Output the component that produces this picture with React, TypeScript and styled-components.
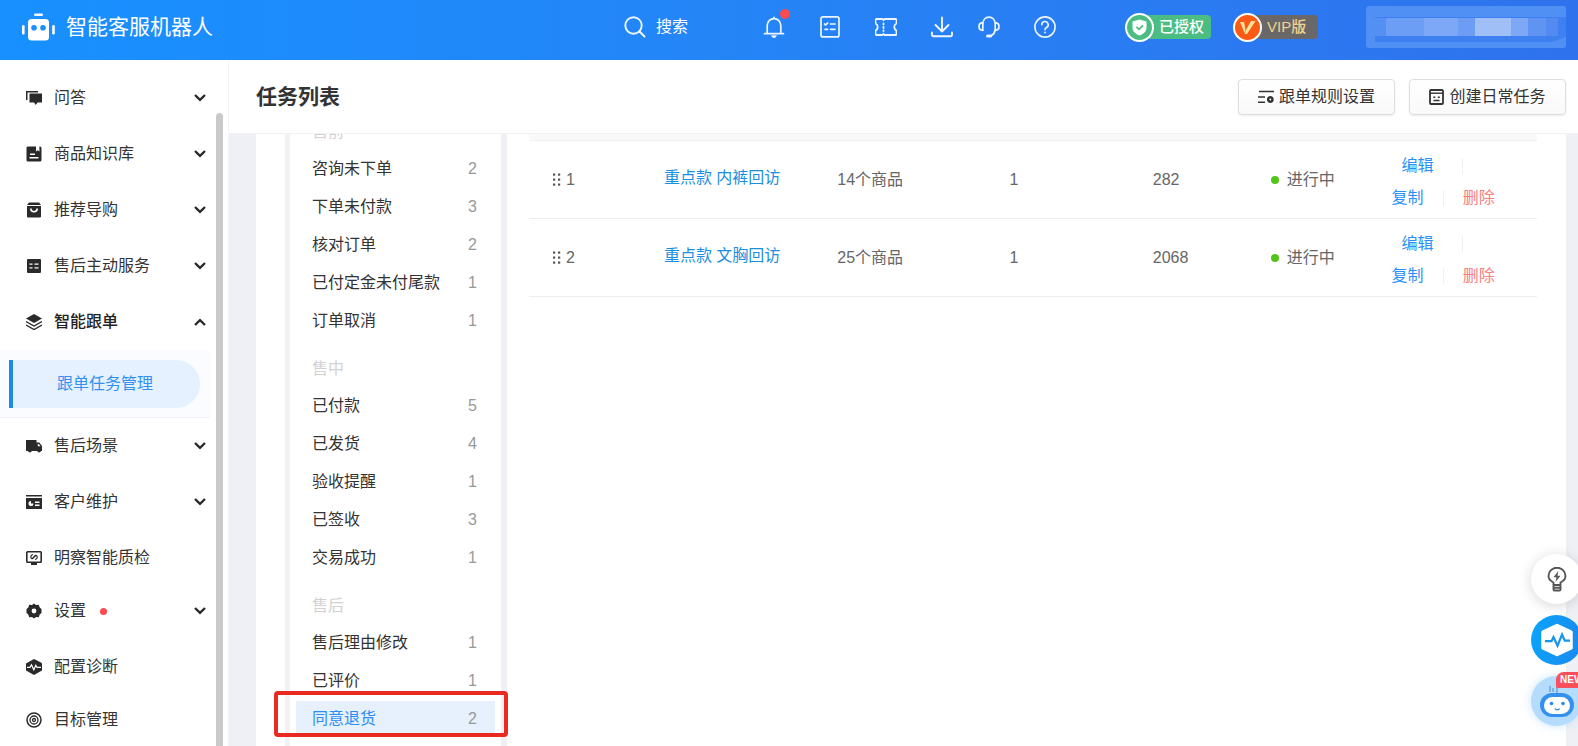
import React from 'react';
import styled, { createGlobalStyle } from 'styled-components';

const GlobalStyle = createGlobalStyle`
  * { box-sizing: border-box; }
  html, body { margin: 0; padding: 0; }
  body {
    font-family: "Liberation Sans", "Noto Sans CJK SC", sans-serif;
    font-size: 16px;
    line-height: 24px;
    color: #333;
    background: #fff;
  }
  button { font: inherit; color: inherit; background: none; border: 0; padding: 0; cursor: pointer; }
  a { text-decoration: none; color: inherit; }
  ul { list-style: none; margin: 0; padding: 0; }
  h1, h2 { margin: 0; font-weight: normal; font-size: inherit; }
  svg { display: block; flex: none; }
`;

/* ---------- shell ---------- */

const Shell = styled.div`
  position: relative;
  display: flex;
  flex-direction: column;
  height: 100vh;
  overflow: hidden;
`;

const Body = styled.div`
  display: flex;
  flex: 1;
  min-height: 0;
`;

/* ---------- top bar ---------- */

const TopBar = styled.header`
  display: flex;
  align-items: center;
  flex: none;
  height: 60px;
  padding: 0 12px 6px 22px;
  color: #fff;
  background: linear-gradient(90deg, #1890ff 0%, #2485f7 45%, #2f72ee 100%);
`;

const Brand = styled.a`
  display: flex;
  align-items: center;
  gap: 11px;
  flex: 1;
  font-size: 21px;
`;

const SearchButton = styled.button`
  display: flex;
  align-items: center;
  gap: 10px;
  margin-right: 75px;
`;

const Tools = styled.div`
  display: flex;
  gap: 34px;
  margin-right: 69px;
`;

const ToolPair = styled.div`
  display: flex;
  gap: 25px;
`;

const ToolButton = styled.button`
  position: relative;
  display: flex;
`;

const AlertDot = styled.i`
  position: absolute;
  top: -7px;
  right: -5px;
  width: 10px;
  height: 10px;
  border-radius: 50%;
  background: #fb4b4f;
`;

const Badges = styled.div`
  display: flex;
  gap: 36px;
  margin: 0 48px 0 14px;
`;

const Badge = styled.span<{ $bg: string; $color: string }>`
  display: flex;
  align-items: center;
  gap: 5px;
  min-width: 71px;
  height: 24px;
  padding-right: 7px;
  font-size: 15px;
  font-weight: 500;
  color: ${p => p.$color};
  background: ${p => p.$bg};
  border-radius: 4px;
`;

const BadgeSeal = styled.span<{ $bg: string }>`
  display: flex;
  align-items: center;
  justify-content: center;
  width: 29px;
  height: 29px;
  margin-left: -14px;
  border: 2px solid #fff;
  border-radius: 50%;
  background: ${p => p.$bg};
`;

/* ---------- sidebar ---------- */

const Sidebar = styled.nav`
  display: flex;
  flex: none;
  width: 229px;
  border-right: 1px solid #f4f4f7;
  background: #fff;
`;

const Menu = styled.ul`
  flex: 1;
  padding-top: 10px;
`;

const MenuButton = styled.button<{ $leaf?: boolean; $open?: boolean }>`
  display: flex;
  align-items: center;
  gap: 12px;
  width: 100%;
  height: ${p => (p.$leaf ? 53 : 56)}px;
  padding: ${p => (p.$leaf ? 3 : 0)}px 4px 0 26px;
  text-align: left;
  color: ${p => (p.$open ? '#222' : '#333')};
  font-weight: ${p => (p.$open ? 500 : 400)};
`;

const MenuLabel = styled.span`
  display: flex;
  align-items: center;
  gap: 14px;
  flex: 1;
`;

const NewDot = styled.i`
  width: 7px;
  height: 7px;
  border-radius: 50%;
  background: #fb4b50;
`;

const SubMenu = styled.ul`
  height: 68px;
  padding: 10px 10px 10px 9px;
  background: #fafcff;
  border-bottom: 1px solid #eff1f5;
`;

const SubLink = styled.a`
  display: flex;
  align-items: center;
  height: 48px;
  padding-left: 44px;
  border-left: 4px solid #1f88ea;
  border-radius: 0 24px 24px 0;
  color: #3390f3;
  background: #e5f1fe;
`;

const ScrollTrack = styled.div`
  flex: none;
  width: 18px;
  padding: 53px 5px 0 6px;
`;

const ScrollThumb = styled.div`
  height: 100%;
  border-radius: 4px 4px 0 0;
  background: #c9c9c9;
`;

/* ---------- page ---------- */

const Page = styled.main`
  display: flex;
  flex-direction: column;
  flex: 1;
  min-width: 0;
`;

const PageHead = styled.div`
  display: flex;
  align-items: center;
  gap: 14px;
  flex: none;
  height: 74px;
  padding: 0 12px 0 27px;
  border-bottom: 1px solid #f1f1f4;
`;

const PageTitle = styled.h1`
  flex: 1;
  font-size: 21px;
  font-weight: 700;
  line-height: 30px;
`;

const HeadButton = styled.button`
  display: flex;
  align-items: center;
  justify-content: center;
  gap: 5px;
  width: 157px;
  height: 36px;
  border: 1px solid #dedede;
  border-radius: 4px;
  background: linear-gradient(#fff, #f9f9f9);
  box-shadow: 0 1px 2px rgba(0, 0, 0, 0.08);
`;

const Canvas = styled.div`
  display: flex;
  flex: 1;
  min-height: 0;
  padding: 0 12px 0 27px;
  background: #eff0f5;
  overflow: hidden;
`;

const Card = styled.div`
  display: flex;
  flex: 1;
  min-width: 0;
  padding: 0 29px;
  background: #fff;
`;

const Stages = styled.aside`
  flex: none;
  width: 222px;
  border-left: 5px solid #f2f2f4;
  border-right: 6px solid #f0f0f4;
`;

const StageList = styled.div`
  display: flex;
  flex-direction: column;
  gap: 11px;
  margin-top: -20px;
`;

const StageTitle = styled.h2`
  padding-left: 22px;
  line-height: 36px;
  color: #d2d2d2;
`;

const StageItem = styled.li`
  position: relative;
  height: 38px;
  padding: 1px 6px;
`;

const StageButton = styled.button<{ $active?: boolean }>`
  display: flex;
  align-items: center;
  justify-content: space-between;
  width: 100%;
  height: 36px;
  padding: 0 18px 0 16px;
  color: ${p => (p.$active ? '#2b8ef5' : '#333')};
  background: ${p => (p.$active ? '#e6f1fd' : 'transparent')};
`;

const StageCount = styled.span`
  color: #999;
`;

const Highlight = styled.div`
  position: absolute;
  inset: -9px -7px 1px -16px;
  border: 4px solid #e82a20;
  border-radius: 4px;
  pointer-events: none;
`;

const TableArea = styled.section`
  flex: 1;
  min-width: 0;
  padding-left: 22px;
`;

const TableTop = styled.div`
  height: 7px;
  background: #f9f9fa;
  border-bottom: 1px solid #f0f0f2;
`;

const Table = styled.table`
  width: 100%;
  table-layout: fixed;
  border-collapse: separate;
  border-spacing: 0;
  color: #666;
`;

const Col = styled.col<{ $w?: string }>`
  width: ${p => p.$w ?? 'auto'};
`;

const Cell = styled.td<{ $top?: boolean }>`
  height: 78px;
  padding: ${p => (p.$top ? '9px' : '0')} 0 0 24px;
  vertical-align: ${p => (p.$top ? 'top' : 'middle')};
  border-bottom: 1px solid #eeeef0;
  white-space: nowrap;
`;

const Inline = styled.span<{ $gap: number }>`
  display: flex;
  align-items: center;
  gap: ${p => p.$gap}px;
`;

const TaskLink = styled.a`
  display: block;
  padding-bottom: 4px;
  color: #1a8fe0;
`;

const RunDot = styled.i`
  width: 8px;
  height: 8px;
  border-radius: 50%;
  background: #52c41a;
`;

const ActionRow = styled.div<{ $first?: boolean }>`
  display: flex;
  align-items: center;
  gap: ${p => (p.$first ? 28 : 19)}px;
  height: 32px;
  padding-left: ${p => (p.$first ? 10 : 0)}px;
`;

const Action = styled.a<{ $danger?: boolean }>`
  color: ${p => (p.$danger ? '#f78080' : '#2b90f5')};
`;

const Divider = styled.i`
  width: 1px;
  height: 16px;
  background: #f0f0f2;
`;

/* ---------- floating tools ---------- */

const FloatStack = styled.div`
  position: absolute;
  right: -4px;
  bottom: 20px;
  display: flex;
  flex-direction: column;
  gap: 11px;
`;

const FloatButton = styled.button<{ $bg: string; $shadow: string }>`
  position: relative;
  display: flex;
  align-items: center;
  justify-content: center;
  width: 51px;
  height: 50px;
  border-radius: 50%;
  background: ${p => p.$bg};
  box-shadow: ${p => p.$shadow};
`;

const NewTag = styled.span`
  position: absolute;
  top: -4px;
  left: 25px;
  padding: 0 4px;
  border-radius: 8px 8px 8px 2px;
  font-size: 10px;
  font-weight: 700;
  line-height: 16px;
  color: #fff;
  background: #f84f5c;
`;

/* ---------- icons ---------- */

const Line = ({ size = 22, w = 1.6, children }: { size?: number; w?: number; children: React.ReactNode }) => (
  <svg width={size} height={size} viewBox="0 0 22 22" fill="none" stroke="#fff" strokeOpacity="0.92" strokeWidth={w} strokeLinecap="round" strokeLinejoin="round">
    {children}
  </svg>
);

const RobotLogo = () => (
  <svg width="33" height="28" viewBox="0 0 33 28" fill="#fff">
    <rect x="12" y="0.5" width="9" height="2.6" rx="1.3" />
    <rect x="0" y="12" width="2.6" height="9.5" rx="1.3" />
    <rect x="30.2" y="12" width="2.6" height="9.5" rx="1.3" />
    <path fillRule="evenodd" d="M9.500 6h14a3.500 3.500 0 0 1 3.500 3.500v14.500a3.500 3.500 0 0 1-3.500 3.500h-14a3.500 3.500 0 0 1-3.500-3.500V9.500A3.500 3.500 0 0 1 9.500 6zM12 12a2.800 2.800 0 1 0 0 5.600 2.800 2.800 0 0 0 0-5.600zm9 0a2.800 2.800 0 1 0 0 5.600 2.800 2.800 0 0 0 0-5.600z" />
  </svg>
);

const SearchIcon = () => (
  <Line w={1.9}><circle cx="9.5" cy="9.5" r="8.2" /><path d="M15.500 15.500l5 5" /></Line>
);
const BellIcon = () => (
  <Line w={1.7}>
    <path d="M1.500 17.700h19M4.200 17.500V9.500a6.800 6.800 0 0 1 13.600 0v8M11 2.500V1.300" />
    <path d="M8.800 20a2.300 2.300 0 0 0 4.400 0z" fill="#fff" strokeWidth="0.8" />
  </Line>
);
const FormIcon = () => (
  <Line w={1.7}>
    <rect x="2" y="0.900" width="18" height="20" rx="2" />
    <path d="M5.500 8l1.200 1 2-2M11.500 8h4.500M6 13.300h2.600M11.500 13.300h4.500" />
  </Line>
);
const TicketIcon = () => (
  <Line w={1.8}>
    <path d="M1.500 3h6l1 1.200L9.500 3h11a1 1 0 0 1 1 1v3.500c-3 1.500-3 5.500 0 7V18a1 1 0 0 1-1 1h-11l-1-1.200L7.500 19h-6a1 1 0 0 1-1-1v-3.500c3-1.500 3-5.500 0-7V4a1 1 0 0 1 1-1z" />
    <path d="M8.500 7.500v1M8.500 11v1M8.500 14.300v0.700" />
  </Line>
);
const DownloadIcon = () => (
  <Line w={1.9}><path d="M11 1.500v13.500M4.500 9l6.500 6.500L17.500 9M1 16.500v2.500a1.200 1.200 0 0 0 1.200 1.200h17.600A1.200 1.200 0 0 0 21 19v-2.500" /></Line>
);
const HeadsetIcon = () => (
  <Line w={1.7}>
    <path d="M4.800 14V8.500C4.800 4 7.500 1.200 11 1.200s6.200 2.800 6.200 7.300V14c-.5 3-2 4.800-4.200 5.800" />
    <path d="M4.500 6.800C2.200 6.800 1 8 1 10.500s1.300 3.800 3.800 3.800M17.500 6.800c2.300 0 3.500 1.200 3.500 3.700s-1.300 3.800-3.800 3.800" />
    <path d="M9.500 20h3" strokeWidth="3" />
  </Line>
);
const HelpIcon = () => (
  <Line>
    <circle cx="11" cy="11" r="10.100" />
    <path d="M7.800 8.700a3.200 3.200 0 1 1 4.700 2.800c-1 .6-1.500 1.100-1.500 2.300M11 16.300v.4" />
  </Line>
);

const ShieldSeal = () => (
  <svg width="15" height="17" viewBox="0 0 15 17">
    <path d="M7.500 0.500L14.500 2.500v6c0 4-3 6.500-7 8-4-1.500-7-4-7-8v-6z" fill="#fff" />
    <path d="M4.500 7.800l2.500 2.500 4-4" fill="none" stroke="#4bbd83" strokeWidth="1.700" />
  </svg>
);
const VipSeal = () => (
  <svg width="17" height="15" viewBox="0 0 17 15" fill="#ffe39a">
    <path d="M1 2h4l1.500 8L5.500 13z" />
    <path d="M12 1h4.500L8 14H5.500L7 10z" />
  </svg>
);

const UserMosaic = () => (
  <svg width="200" height="42" viewBox="0 0 200 42">
    <rect width="200" height="42" rx="3" fill="#5090f5" />
    <path d="M9 11h191v20l-14 5H9z" fill="#3f80f0" />
    <rect x="2" y="12" width="18" height="18" fill="#5490f4" />
    <rect x="20" y="12" width="38" height="18" fill="#6c9ef5" />
    <rect x="58" y="12" width="34" height="18" fill="#7da8f5" />
    <rect x="92" y="12" width="17" height="18" fill="#6c9cf3" />
    <rect x="109" y="12" width="36" height="18" fill="#a0bff7" />
    <rect x="145" y="12" width="17" height="18" fill="#7ea7f5" />
    <rect x="162" y="12" width="18" height="18" fill="#5f94f2" />
    <rect x="180" y="12" width="12" height="18" fill="#528af1" />
  </svg>
);

const Chevron = ({ up }: { up?: boolean }) => (
  <svg width="12" height="8" viewBox="0 0 12 8" fill="none" stroke="#2a2a2a" strokeWidth="2.400">
    <path d={up ? 'M1 7l5-4.800L11 7' : 'M1 1l5 4.800L11 1'} />
  </svg>
);

const menuGlyphs: Record<string, React.ReactNode> = {
  chat: <><path d="M0 1h12v1.500H1.500V10H0z" /><path d="M3.500 3.500H16V12.500h-4.500L9.800 15 8 12.500H3.500z" /></>,
  book: <path fillRule="evenodd" d="M1.500 0.500H10v5l1.700-1.200L13.400 5.500V0.500H14a1.500 1.500 0 0 1 1.500 1.500v12a1.500 1.500 0 0 1-1.500 1.500H2A1.500 1.500 0 0 1 .500 14V1.500zM4 7.500V9h5V7.500zM3.500 11v1.500h9V11z" />,
  bag: <path fillRule="evenodd" d="M3 0.500h10l2 2.500H1zM1 4h14v10.500a1 1 0 0 1-1 1H2a1 1 0 0 1-1-1zM4 6.500a4 4 0 0 0 8 0h-1.600a2.400 2.400 0 0 1-4.800 0z" />,
  list: <path fillRule="evenodd" d="M2 1h12a1 1 0 0 1 1 1v12a1 1 0 0 1-1 1H2a1 1 0 0 1-1-1V2a1 1 0 0 1 1-1zM3.500 5.500v1.200h3V5.500zM8.500 5.500v1.200h4V5.500zM3.500 9.200v1.200h3V9.200zM8.500 9.200v1.200h4V9.200z" />,
  layers: <><path d="M8 0l8 4.500L8 9 0 4.500z" /><path d="M0 7.500l8 4.500 8-4.500M0 11l8 4.500 8-4.500" fill="none" stroke="#2a2a2a" strokeWidth="1.400" /></>,
  truck: <path fillRule="evenodd" d="M0 2h10.500v2.500h2.800L16 8v5h-1a2 2 0 0 1-3.800 0H5.800a2 2 0 0 1-3.800 0H0zM11.800 6v2.200h2.700L12.800 6z" />,
  card: <path fillRule="evenodd" d="M0 1h16v1.500H0zM0 4h16v11H0zM5 7a2.500 2.500 0 1 0 2.500 2.500H5zM9 7.500V9h4.500V7.500zM9 10.500V12h4.500v-1.500z" />,
  monitor: <><path fillRule="evenodd" d="M1.500 1h13A1.500 1.500 0 0 1 16 2.500v9a1.500 1.500 0 0 1-1.500 1.500h-13A1.500 1.500 0 0 1 0 11.500v-9A1.500 1.500 0 0 1 1.500 1zM1.600 2.600v8.800h12.800V2.600z" /><path d="M5 13h6v2H5z" /><path d="M7 4.500C4.500 5 4 7.500 6 8.800l3.500-3.600M9 9.500c2.500-.5 3-3 1-4.300L6.500 8.800" fill="none" stroke="#2a2a2a" strokeWidth="1.200" /></>,
  gear: <path fillRule="evenodd" d="M8 0.500l2 1.500 2.800-.2.900 2.600L15.500 6v4l-1.800 1.500-.9 2.700L10 14l-2 1.500L6 14l-2.800.200-.9-2.700L.500 10V6l1.800-1.600.9-2.600L6 2zM8 5.600a2.400 2.400 0 1 0 0 4.800 2.400 2.400 0 0 0 0-4.800z" />,
  pulse: <><path d="M8 0l7 3.500 1 1V11.500L8 16 0 11.500V4.500z" /><path d="M1 8.300h3l1.500-2.500 2.300 5 2-4.500L11 8.300h4" fill="none" stroke="#fff" strokeWidth="1.200" /></>,
  target: <g fill="none" stroke="#2a2a2a"><circle cx="8" cy="8" r="7" strokeWidth="1.500" /><circle cx="8" cy="8" r="4" strokeWidth="1.300" /><circle cx="8" cy="8" r="1.500" strokeWidth="1.300" /></g>,
};

const MenuIcon = ({ name }: { name: string }) => (
  <svg width="16" height="16" viewBox="0 0 16 16" fill="#2a2a2a">{menuGlyphs[name]}</svg>
);

const RulesIcon = () => (
  <svg width="16" height="14" viewBox="0 0 16 14" fill="none" stroke="#333" strokeWidth="1.500">
    <path d="M1 1.500h15M0 7h7M0 12.200h7" />
    <circle cx="12.300" cy="9.500" r="2.200" strokeWidth="2.400" />
  </svg>
);
const CreateIcon = () => (
  <svg width="15" height="16" viewBox="0 0 15 16" fill="none" stroke="#333" strokeWidth="1.800">
    <rect x="1" y="1" width="13" height="14" rx="1" />
    <path d="M1 4.200h13" strokeWidth="1.400" />
    <path d="M4.300 8.300h2M8.800 8.300h2M4.500 11.500h6" strokeWidth="1.600" />
  </svg>
);
const DragIcon = () => (
  <svg width="8" height="13" viewBox="0 0 8 13" fill="#555">
    {[0.5, 5.5, 10.5].map(y => (
      <React.Fragment key={y}>
        <rect x="0" y={y} width="2.200" height="2.200" />
        <rect x="5" y={y} width="2.200" height="2.200" />
      </React.Fragment>
    ))}
  </svg>
);

const BulbIcon = () => (
  <svg width="20" height="25" viewBox="0 0 20 25" fill="none" stroke="#555" strokeWidth="1.900">
    <path d="M6.500 18v-2.500C3.500 14 1.500 12 1.500 9a8.500 8.300 0 0 1 17 0c0 3-2 5-5 6.500V18zM6.500 18v4.500a1 1 0 0 0 1 1h5a1 1 0 0 0 1-1V18M6.500 20.800h7" />
    <path d="M11.300 4L6.500 10.300h3L8.500 15l5-6.300h-3z" fill="#555" stroke="none" />
  </svg>
);
const HexPulseIcon = () => (
  <svg width="34" height="34" viewBox="0 0 34 34">
    <path d="M17 2.500L31 9v16L17 31.500 3 25V9z" fill="#fff" stroke="#fff" strokeWidth="3.500" strokeLinejoin="round" />
    <path d="M5 18.200h6.500l2-4.200 4 8.800 4.500-11.300 2.800 6.200H30" fill="none" stroke="#1296f0" strokeWidth="2.200" />
  </svg>
);
const BotIcon = () => (
  <svg width="36" height="36" viewBox="0 0 36 36">
    <path d="M18 11V4M11 9V3M14 9V5" stroke="#6aa6e4" strokeWidth="1.500" />
    <rect x="1" y="10" width="34" height="24" rx="12" fill="#3490ef" />
    <rect x="5" y="14" width="26" height="17" rx="8.500" fill="#fff" />
    <circle cx="12.500" cy="20.500" r="1.800" fill="#2e86e6" />
    <circle cx="24" cy="20.500" r="1.800" fill="#2e86e6" />
    <path d="M16 25.500a2.500 2.500 0 0 0 4.500 0" fill="none" stroke="#2e86e6" strokeWidth="1.400" />
  </svg>
);

/* ---------- data ---------- */

type MenuEntry = { icon: string; label: string; leaf?: boolean; open?: boolean; dot?: boolean; child?: string };

const menu: MenuEntry[] = [
  { icon: 'chat', label: '问答' },
  { icon: 'book', label: '商品知识库' },
  { icon: 'bag', label: '推荐导购' },
  { icon: 'list', label: '售后主动服务' },
  { icon: 'layers', label: '智能跟单', open: true, child: '跟单任务管理' },
  { icon: 'truck', label: '售后场景' },
  { icon: 'card', label: '客户维护' },
  { icon: 'monitor', label: '明察智能质检', leaf: true },
  { icon: 'gear', label: '设置', dot: true },
  { icon: 'pulse', label: '配置诊断', leaf: true },
  { icon: 'target', label: '目标管理', leaf: true },
];

const stages: { title: string; items: [string, number][] }[] = [
  { title: '售前', items: [['咨询未下单', 2], ['下单未付款', 3], ['核对订单', 2], ['已付定金未付尾款', 1], ['订单取消', 1]] },
  { title: '售中', items: [['已付款', 5], ['已发货', 4], ['验收提醒', 1], ['已签收', 3], ['交易成功', 1]] },
  { title: '售后', items: [['售后理由修改', 1], ['已评价', 1], ['同意退货', 2]] },
];
const activeStage = '同意退货';

const tasks = [
  { no: 1, name: '重点款 内裤回访', goods: '14个商品', steps: 1, sent: 282 },
  { no: 2, name: '重点款 文胸回访', goods: '25个商品', steps: 1, sent: 2068 },
];

const colWidths = ['11%', '17.2%', '17.1%', '14.2%', '11.7%', '12%', undefined];

export default function App() {
  return (
    <Shell>
      <GlobalStyle />
      <TopBar>
        <Brand href="#"><RobotLogo />智能客服机器人</Brand>
        <SearchButton><SearchIcon />搜索</SearchButton>
        <Tools>
          <ToolButton aria-label="通知"><BellIcon /><AlertDot /></ToolButton>
          <ToolButton aria-label="表单"><FormIcon /></ToolButton>
          <ToolButton aria-label="卡券"><TicketIcon /></ToolButton>
          <ToolPair>
            <ToolButton aria-label="下载"><DownloadIcon /></ToolButton>
            <ToolButton aria-label="客服"><HeadsetIcon /></ToolButton>
          </ToolPair>
          <ToolButton aria-label="帮助"><HelpIcon /></ToolButton>
        </Tools>
        <Badges>
          <Badge $bg="#4bbd83" $color="#fff"><BadgeSeal $bg="#4bbd83"><ShieldSeal /></BadgeSeal>已授权</Badge>
          <Badge $bg="#6a6769" $color="#efd48c"><BadgeSeal $bg="#fa5a14"><VipSeal /></BadgeSeal>VIP版</Badge>
        </Badges>
        <UserMosaic />
      </TopBar>

      <Body>
        <Sidebar>
          <Menu>
            {menu.map(m => (
              <li key={m.label}>
                <MenuButton $leaf={m.leaf} $open={m.open}>
                  <MenuIcon name={m.icon} />
                  <MenuLabel>{m.label}{m.dot && <NewDot />}</MenuLabel>
                  {!m.leaf && <Chevron up={m.open} />}
                </MenuButton>
                {m.child && (
                  <SubMenu>
                    <li><SubLink href="#">{m.child}</SubLink></li>
                  </SubMenu>
                )}
              </li>
            ))}
          </Menu>
          <ScrollTrack><ScrollThumb /></ScrollTrack>
        </Sidebar>

        <Page>
          <PageHead>
            <PageTitle>任务列表</PageTitle>
            <HeadButton><RulesIcon />跟单规则设置</HeadButton>
            <HeadButton><CreateIcon />创建日常任务</HeadButton>
          </PageHead>
          <Canvas>
            <Card>
              <Stages>
                <StageList>
                  {stages.map(s => (
                    <section key={s.title}>
                      <StageTitle>{s.title}</StageTitle>
                      <ul>
                        {s.items.map(([label, count]) => (
                          <StageItem key={label}>
                            <StageButton $active={label === activeStage}>
                              {label}<StageCount>{count}</StageCount>
                            </StageButton>
                            {label === activeStage && <Highlight />}
                          </StageItem>
                        ))}
                      </ul>
                    </section>
                  ))}
                </StageList>
              </Stages>
              <TableArea>
                <TableTop />
                <Table>
                  <colgroup>{colWidths.map((w, i) => <Col key={i} $w={w} />)}</colgroup>
                  <tbody>
                    {tasks.map(t => (
                      <tr key={t.no}>
                        <Cell><Inline $gap={5}><DragIcon />{t.no}</Inline></Cell>
                        <Cell><TaskLink href="#">{t.name}</TaskLink></Cell>
                        <Cell>{t.goods}</Cell>
                        <Cell>{t.steps}</Cell>
                        <Cell>{t.sent}</Cell>
                        <Cell><Inline $gap={8}><RunDot />进行中</Inline></Cell>
                        <Cell $top>
                          <ActionRow $first><Action href="#">编辑</Action><Divider /></ActionRow>
                          <ActionRow><Action href="#">复制</Action><Divider /><Action href="#" $danger>删除</Action></ActionRow>
                        </Cell>
                      </tr>
                    ))}
                  </tbody>
                </Table>
              </TableArea>
            </Card>
          </Canvas>
        </Page>
      </Body>

      <FloatStack>
        <FloatButton aria-label="建议" $bg="#fff" $shadow="0 2px 14px rgba(0, 0, 0, 0.16)"><BulbIcon /></FloatButton>
        <FloatButton aria-label="诊断" $bg="linear-gradient(100deg, #0aa5fa, #1b88ee)" $shadow="none"><HexPulseIcon /></FloatButton>
        <FloatButton aria-label="助手" $bg="#b5dcfc" $shadow="0 0 10px rgba(120, 190, 250, 0.4)"><BotIcon /><NewTag>NEW</NewTag></FloatButton>
      </FloatStack>
    </Shell>
  );
}
